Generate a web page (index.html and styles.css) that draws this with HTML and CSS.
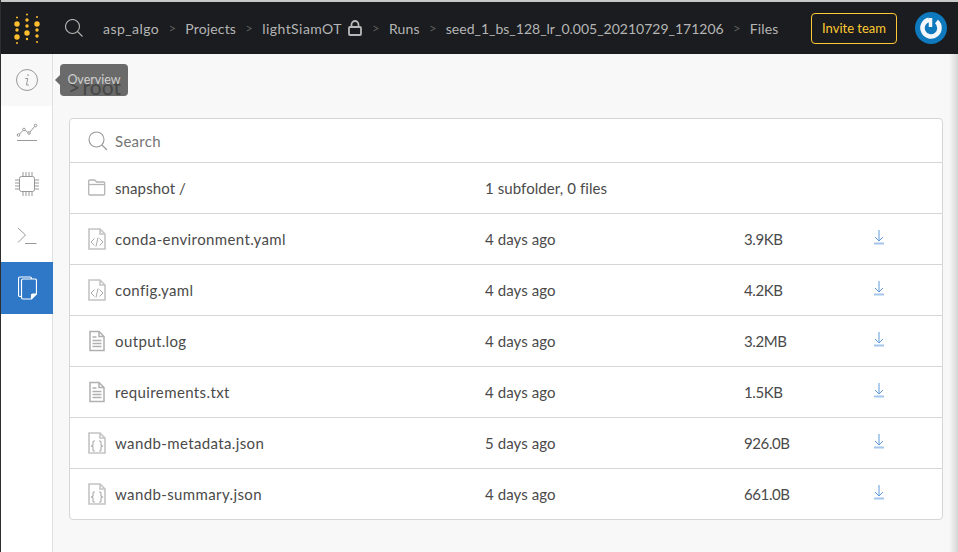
FILE: index.html
```html
<!DOCTYPE html>
<html lang="en">
  <head>
    <meta charset="UTF-8" />
    <title>Files</title>
    <link rel="stylesheet" href="styles.css">
  </head>
  <body>
    <header class="topbar">
      <svg class="logo" width="28" height="36" viewBox="0 0 28 36">
        <g fill="#ffbe2e">
          <circle cx="4" cy="7.500" r="1"/><circle cx="4" cy="14" r="2.700"/><circle cx="4" cy="20" r="1.700"/><circle cx="4" cy="27" r="2.700"/><circle cx="4" cy="33" r="1"/>
          <circle cx="14" cy="4.500" r="1"/><circle cx="14" cy="10" r="1.700"/><circle cx="14" cy="16" r="1.700"/><circle cx="14" cy="23" r="2.700"/><circle cx="14" cy="29" r="1.200"/>
          <circle cx="24" cy="7" r="1"/><circle cx="24" cy="14" r="2.700"/><circle cx="24" cy="20" r="1.700"/><circle cx="24" cy="26" r="1.700"/><circle cx="24" cy="32" r="1"/>
        </g>
      </svg>
      <svg class="top-search" width="18" height="18" viewBox="0 0 18 18" fill="none" stroke="#b5b5b5" stroke-width="1.100">
        <circle cx="7.500" cy="7.500" r="7"/><path d="M12.500 12.500l5 5"/>
      </svg>
      <nav class="crumbs">
        <span class="crumb-wide">asp_algo</span><span class="sep">&gt;</span>
        <span>Projects</span><span class="sep">&gt;</span>
        <span class="crumb-wide">lightSiamOT</span>
        <svg class="lock" width="14" height="16" viewBox="0 0 14 16" fill="none" stroke="#b9b9b9" stroke-width="1.800">
          <rect x="1" y="7" width="12" height="8" rx="1"/><path d="M3.500 7V4.500a3.500 3.500 0 0 1 7 0V7"/>
        </svg>
        <span class="sep sep-lock">&gt;</span>
        <span>Runs</span><span class="sep">&gt;</span>
        <span class="crumb-run">seed_1_bs_128_lr_0.005_20210729_171206</span><span class="sep">&gt;</span>
        <span>Files</span>
      </nav>
      <button class="invite">Invite team</button>
      <svg class="avatar" width="32" height="32" viewBox="0 0 32 32">
        <circle cx="16" cy="16" r="16" fill="#0f79bd"/>
        <path d="M21.500 9.500a8.500 8.500 0 1 1-7.500-1.800" fill="none" stroke="#f4f8fb" stroke-width="4.500"/>
        <path d="M15.500 6v9" stroke="#f4f8fb" stroke-width="3.500"/>
      </svg>
    </header>

    <div class="main">
      <aside class="sidebar">
        <div class="side-item side-hover">
          <svg width="24" height="24" viewBox="0 0 24 24" fill="none" stroke="#999" stroke-width="1">
            <circle cx="12" cy="12" r="10.500"/>
            <path d="M13 6.500v1.200M10.500 10.500h2.300l-1.400 6.500h2.200" stroke-linecap="round"/>
          </svg>
        </div>
        <div class="side-item">
          <svg width="22" height="20" viewBox="0 0 22 20" fill="none" stroke="#999" stroke-width="1">
            <path d="M1 18.500h20"/>
            <circle cx="2.500" cy="13" r="1.300"/><circle cx="8" cy="7.500" r="1.300"/><circle cx="13" cy="11" r="1.300"/><circle cx="19.500" cy="3.500" r="1.300"/>
            <path d="M3.500 12l3.500-3.500M9.200 8.400l2.600 1.800M14 10l4.600-5.500"/>
          </svg>
        </div>
        <div class="side-item">
          <svg width="24" height="26" viewBox="0 0 24 26" fill="none" stroke="#999" stroke-width="1">
            <rect x="4.500" y="5.500" width="15" height="15" rx="2"/>
            <path d="M8 1v4.500M11 1v4.500M14 1v4.500M17 1v4.500M8 20.500V25M11 20.500V25M14 20.500V25M17 20.500V25M0 9h4.500M0 12h4.500M0 15h4.500M0 18h4.500M19.500 9H24M19.500 12H24M19.500 15H24M19.500 18H24"/>
          </svg>
        </div>
        <div class="side-item">
          <svg width="20" height="18" viewBox="0 0 20 18" fill="none" stroke="#999" stroke-width="1">
            <path d="M1 1l7.500 7L1 15.500M8 16.500h11.500"/>
          </svg>
        </div>
        <div class="side-item side-active">
          <svg width="19" height="24" viewBox="0 0 19 24" fill="none" stroke="#fff" stroke-width="1.200">
            <path d="M3 20.500H2a1.500 1.500 0 0 1-1.500-1.500V2.500A1.500 1.500 0 0 1 2 1h10a1.500 1.500 0 0 1 1.500 1.500V3"/>
            <path d="M5 3h12a1.500 1.500 0 0 1 1.500 1.500V18l-5 5H5a1.500 1.500 0 0 1-1.500-1.500v-17A1.500 1.500 0 0 1 5 3z"/>
            <path d="M13.500 23v-4a1 1 0 0 1 1-1h4" fill="#fff"/>
          </svg>
        </div>
      </aside>

      <section class="content">
        <div class="root-title">&gt; root</div>
        <div class="tooltip">Overview</div>
        <div class="file-card">
          <div class="search-row">
            <svg width="20" height="20" viewBox="0 0 20 20" fill="none" stroke="#999" stroke-width="1.100">
              <circle cx="8.500" cy="8.500" r="7.500"/><path d="M14 14l5 5"/>
            </svg>
            <span>Search</span>
          </div>

          <div class="file-row">
            <div class="col-name col-folder">
              <svg class="file-icon" width="18" height="18" viewBox="0 0 18 18" fill="none" stroke="#b5b5b5" stroke-width="1.300">
                <path d="M.7 15V2a1 1 0 0 1 1-1h5l2 2h7a1 1 0 0 1 1 1v11a1 1 0 0 1-1 1h-14a1 1 0 0 1-1-1z"/>
                <path d="M1 5.500h15.500"/>
              </svg>
              <span>snapshot /</span>
            </div>
            <div class="col-date">1 subfolder, 0 files</div>
          </div>

          <div class="file-row">
            <div class="col-name">
              <svg class="file-icon" width="18" height="22" viewBox="0 0 18 22" fill="none" stroke="#c4c4c4" stroke-width="1.600">
                <path d="M1 1h11l5 5v15H1z"/><path d="M12 1v5h5"/>
                <path d="M6.500 10.500L3 14l3.500 3.500M11.500 10.500L15 14l-3.500 3.500M10 9.500l-2 9" stroke="#aaa" stroke-width="1"/>
              </svg>
              <span>conda-environment.yaml</span>
            </div>
            <div class="col-date">4 days ago</div>
            <div class="col-size">3.9KB</div>
            <div class="col-dl"><svg width="12" height="15" viewBox="0 0 12 15" fill="none" stroke="#5f9bdc" stroke-width="1"><path d="M6 0v11M2 7l4 4 4-4"/><path d="M1 13.500h10" stroke="#a5c6ea" stroke-width="2"/></svg></div>
          </div>

          <div class="file-row">
            <div class="col-name">
              <svg class="file-icon" width="18" height="22" viewBox="0 0 18 22" fill="none" stroke="#c4c4c4" stroke-width="1.600">
                <path d="M1 1h11l5 5v15H1z"/><path d="M12 1v5h5"/>
                <path d="M6.500 10.500L3 14l3.500 3.500M11.500 10.500L15 14l-3.500 3.500M10 9.500l-2 9" stroke="#aaa" stroke-width="1"/>
              </svg>
              <span>config.yaml</span>
            </div>
            <div class="col-date">4 days ago</div>
            <div class="col-size">4.2KB</div>
            <div class="col-dl"><svg width="12" height="15" viewBox="0 0 12 15" fill="none" stroke="#5f9bdc" stroke-width="1"><path d="M6 0v11M2 7l4 4 4-4"/><path d="M1 13.500h10" stroke="#a5c6ea" stroke-width="2"/></svg></div>
          </div>

          <div class="file-row">
            <div class="col-name">
              <svg class="file-icon" width="18" height="22" viewBox="0 0 18 22" fill="none" stroke="#b0b0b0" stroke-width="1.500">
                <path d="M2 1.500h9l5 5v14H2z"/><path d="M11 1.500v5h5"/>
                <path d="M4.500 7h4M4.500 10.500h9M4.500 13.500h9M4.500 16.500h9"/>
              </svg>
              <span>output.log</span>
            </div>
            <div class="col-date">4 days ago</div>
            <div class="col-size">3.2MB</div>
            <div class="col-dl"><svg width="12" height="15" viewBox="0 0 12 15" fill="none" stroke="#5f9bdc" stroke-width="1"><path d="M6 0v11M2 7l4 4 4-4"/><path d="M1 13.500h10" stroke="#a5c6ea" stroke-width="2"/></svg></div>
          </div>

          <div class="file-row">
            <div class="col-name">
              <svg class="file-icon" width="18" height="22" viewBox="0 0 18 22" fill="none" stroke="#b0b0b0" stroke-width="1.500">
                <path d="M2 1.500h9l5 5v14H2z"/><path d="M11 1.500v5h5"/>
                <path d="M4.500 7h4M4.500 10.500h9M4.500 13.500h9M4.500 16.500h9"/>
              </svg>
              <span>requirements.txt</span>
            </div>
            <div class="col-date">4 days ago</div>
            <div class="col-size">1.5KB</div>
            <div class="col-dl"><svg width="12" height="15" viewBox="0 0 12 15" fill="none" stroke="#5f9bdc" stroke-width="1"><path d="M6 0v11M2 7l4 4 4-4"/><path d="M1 13.500h10" stroke="#a5c6ea" stroke-width="2"/></svg></div>
          </div>

          <div class="file-row">
            <div class="col-name">
              <svg class="file-icon" width="18" height="22" viewBox="0 0 18 22" fill="none" stroke="#c4c4c4" stroke-width="1.600">
                <path d="M1 1h11l5 5v15H1z"/><path d="M12 1v5h5"/>
                <path d="M7 9H6a1 1 0 0 0-1 1v3l-1.500 1L5 15v3a1 1 0 0 0 1 1h1M11 9h1a1 1 0 0 1 1 1v3l1.500 1-1.500 1v3a1 1 0 0 1-1 1h-1" stroke="#aaa" stroke-width="1.100"/>
              </svg>
              <span>wandb-metadata.json</span>
            </div>
            <div class="col-date">5 days ago</div>
            <div class="col-size">926.0B</div>
            <div class="col-dl"><svg width="12" height="15" viewBox="0 0 12 15" fill="none" stroke="#5f9bdc" stroke-width="1"><path d="M6 0v11M2 7l4 4 4-4"/><path d="M1 13.500h10" stroke="#a5c6ea" stroke-width="2"/></svg></div>
          </div>

          <div class="file-row">
            <div class="col-name">
              <svg class="file-icon" width="18" height="22" viewBox="0 0 18 22" fill="none" stroke="#c4c4c4" stroke-width="1.600">
                <path d="M1 1h11l5 5v15H1z"/><path d="M12 1v5h5"/>
                <path d="M7 9H6a1 1 0 0 0-1 1v3l-1.500 1L5 15v3a1 1 0 0 0 1 1h1M11 9h1a1 1 0 0 1 1 1v3l1.500 1-1.500 1v3a1 1 0 0 1-1 1h-1" stroke="#aaa" stroke-width="1.100"/>
              </svg>
              <span>wandb-summary.json</span>
            </div>
            <div class="col-date">4 days ago</div>
            <div class="col-size">661.0B</div>
            <div class="col-dl"><svg width="12" height="15" viewBox="0 0 12 15" fill="none" stroke="#5f9bdc" stroke-width="1"><path d="M6 0v11M2 7l4 4 4-4"/><path d="M1 13.500h10" stroke="#a5c6ea" stroke-width="2"/></svg></div>
          </div>
        </div>
      </section>
    </div>
  </body>
</html>
```

FILE: styles.css
```css
* {
  box-sizing: border-box;
}

html,
body {
  height: 100%;
}

body {
  margin: 0;
  overflow: hidden;
  display: flex;
  flex-direction: column;
  background-color: #f8f8f8;
  border-left: 1px solid #2e2e2e;
  font-family: "Lato", "Noto Sans", sans-serif;
  font-size: 15px;
  color: #4a4a4a;
}

.topbar {
  height: 54px;
  flex-shrink: 0;
  display: flex;
  align-items: center;
  padding-left: 12px;
  background-color: #1a1c1f;
  border-top: 2px solid #c8c8c8;
}

.logo {
  flex-shrink: 0;
}

.top-search {
  margin-left: 24px;
  flex-shrink: 0;
}

.crumbs {
  display: flex;
  align-items: center;
  margin-left: 20px;
  color: #b5b5b5;
  font-size: 14px;
  letter-spacing: 0.15px;
  white-space: nowrap;
}

.crumb-wide {
  letter-spacing: 0.45px;
}

.crumb-run {
  letter-spacing: 0;
}

.sep {
  margin: 0 9.200px;
  color: #5c5c5c;
  font-size: 13px;
}

.sep-lock {
  margin-left: 10px;
}

.lock {
  margin-left: 6px;
}

.invite {
  margin-left: auto;
  width: 86px;
  height: 31px;
  padding: 0;
  background: none;
  border: 1px solid #ffc933;
  border-radius: 4px;
  color: #ffc933;
  font-family: inherit;
  font-size: 13px;
}

.avatar {
  margin: 0 11px 0 18px;
  flex-shrink: 0;
}

.main {
  flex: 1;
  display: flex;
  min-height: 0;
}

.sidebar {
  width: 52px;
  flex-shrink: 0;
  background-color: #ffffff;
  border-right: 1px solid #e0e0e0;
}

.side-item {
  height: 52px;
  display: flex;
  align-items: center;
  justify-content: center;
}

.side-hover {
  background-color: #f8f8f8;
}

.side-active {
  margin-right: -1px;
  background-color: #2f78c8;
}

.content {
  position: relative;
  flex: 1;
  padding: 20px 15px 0 16px;
}

/* grey shade along the right edge of the page */
.content::after {
  content: "";
  position: absolute;
  top: 0;
  right: 0;
  bottom: 0;
  width: 9px;
  background: linear-gradient(to right, rgba(210, 210, 210, 0), rgba(210, 210, 210, 0.9));
}

.root-title {
  height: 44px;
  margin-left: -1px;
  font-size: 21px;
  line-height: 26px;
  word-spacing: -3px;
  color: #4a4a4a;
}

.tooltip {
  position: absolute;
  left: 7px;
  top: 10px;
  width: 68px;
  height: 32px;
  line-height: 32px;
  text-align: center;
  font-size: 12.500px;
  color: #d0d0d0;
  background-color: rgba(70, 70, 70, 0.8);
  border-radius: 4px;
}

.tooltip::before {
  content: "";
  position: absolute;
  left: -5px;
  top: 11px;
  border-style: solid;
  border-width: 5px 5px 5px 0;
  border-color: transparent rgba(70, 70, 70, 0.8) transparent transparent;
}

.file-card {
  background-color: #ffffff;
  border: 1px solid #d6d6d6;
  border-radius: 4px;
}

.search-row {
  height: 43px;
  display: flex;
  align-items: center;
  padding-left: 18px;
  color: #757575;
}

.search-row span {
  margin-left: 7px;
  letter-spacing: 0.3px;
}

.file-row {
  height: 51px;
  display: flex;
  align-items: center;
  border-top: 1px solid #d6d6d6;
}

.col-name {
  width: 415px;
  display: flex;
  align-items: center;
  padding-left: 18px;
  letter-spacing: 0.38px;
}

.col-folder {
  letter-spacing: 0.1px;
}

.file-icon {
  flex-shrink: 0;
  margin-right: 9px;
}

.col-date {
  width: 259px;
  letter-spacing: 0.08px;
}

.col-size {
  width: 129px;
  letter-spacing: -0.4px;
}

.col-dl {
  display: flex;
  padding-bottom: 4px;
}
```
